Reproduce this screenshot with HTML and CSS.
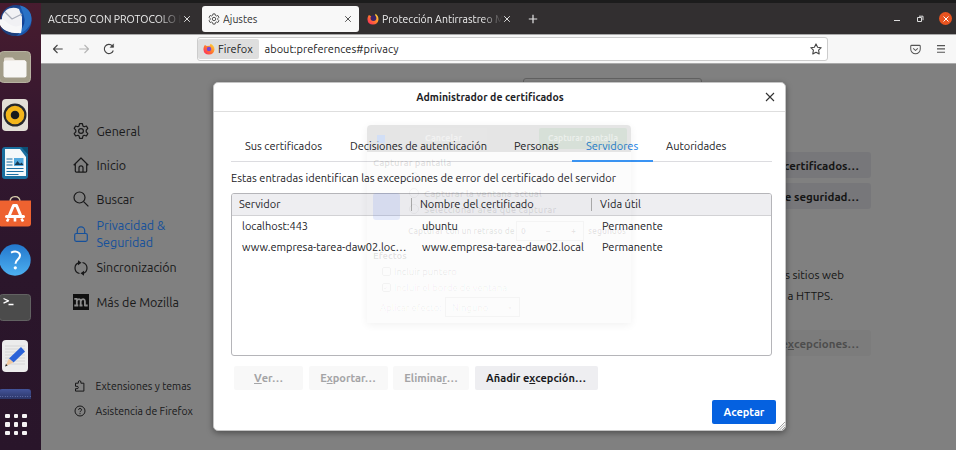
FILE: index.html
```html
<!DOCTYPE html>
<html lang="es">
<head>
<meta charset="utf-8">
<title>Ajustes</title>
<link rel="stylesheet" href="styles.css">
</head>
<body>
<div class="desktop">
  <div class="topstrip"></div>
  <nav class="dock">
    <div class="slot"><svg width="34" height="34" viewBox="0 0 34 34"><defs><radialGradient id="tb" cx=".75" cy=".6" r=".6"><stop offset="0" stop-color="#123f92"/><stop offset=".7" stop-color="#1c5cb2"/><stop offset="1" stop-color="#1a4288"/></radialGradient></defs><circle cx="18" cy="16.500" r="15.500" fill="url(#tb)"/><path d="M22 1.500c9 2 13 9 11 17-2 6-9 11-13 12 5-6 8-12 6-18-1-5-3-8-4-11z" fill="#2a72c6"/><path d="M4 13C6 5 14 2 21 5l3 8v9l-1 6-10-2-9-3z" fill="#f1f1f4"/><path d="M7 8 14 15 24 10" fill="none" stroke="#a9adb9" stroke-width="1.200"/><path d="M1 16c4-2 6 1 10 4 5 3 8 3 13 1l-1 8C15 30 6 29 2 21z" fill="#f7f7f8"/><path d="M2 22c4 5 12 8 20 7l-4 3C10 32 4 28 2 22z" fill="#1b3e7c"/></svg></div>
    <div class="slot"><svg width="32" height="32" viewBox="0 0 32 32"><rect x=".5" y=".5" width="31" height="31" rx="4" fill="#a29c88" stroke="#b7b2a1"/><path d="M5 10V8q0-1.500 1.500-1.500h7L16 9h10v4H5z" fill="#e4dcd2"/><rect x="4.500" y="9.500" width="23" height="17" rx="2" fill="#f8f7f5"/></svg></div>
    <div class="slot"><svg width="32" height="32" viewBox="0 0 32 32"><rect x="3" y="0" width="26" height="32" rx="4" fill="#e2ded6"/><circle cx="16" cy="16" r="11.500" fill="#26282d"/><circle cx="16" cy="16" r="6.800" fill="none" stroke="#f3b51b" stroke-width="5"/><circle cx="16" cy="16" r="3.800" fill="#16181c"/></svg></div>
    <div class="slot"><svg width="32" height="32" viewBox="0 0 32 32"><path d="M6 0h17l6 7v22q0 3-3 3H6q-3 0-3-3V3q0-3 3-3z" fill="#1a6f9f"/><path d="M22 0h7v7z" fill="#0c4e74"/><path d="M6 2h15l6 8v19H6z" fill="#f4f8fa"/><path d="M7.500 12h6M7.500 15h6M7.500 18h6M7.500 21.500h17M7.500 24.500h17M7.500 27.500h12" stroke="#1c6fa3" stroke-width="1.200"/><rect x="15" y="11" width="9.500" height="8" fill="#52a8dd"/><path d="m15.500 18 3-4 2.500 3 1.500-1.500L24.500 18z" fill="#173a52"/></svg></div>
    <div class="slot"><svg width="32" height="32" viewBox="0 0 32 32"><path d="M11 6q0-5.300 5-5.300t5 5.300" fill="none" stroke="#d9cfae" stroke-width="1.300"/><path d="M0 4.500h32v23q0 3-3 3H3q-3 0-3-3z" fill="#ee6230"/><path d="M10.500 19 14.500 9.500h3l4 9.500M7.500 20.500h17" stroke="#fff" stroke-width="3" fill="none" stroke-linecap="round"/><path d="M9.500 22.500 8 25.500M16 22v3.500M22.500 22.500l1.500 3" stroke="#fff" stroke-width="2.600" fill="none"/></svg></div>
    <div class="slot"><svg width="32" height="32" viewBox="0 0 32 32"><defs><linearGradient id="hp" x1="0" y1="0" x2="0" y2="1"><stop offset="0" stop-color="#2377cd"/><stop offset="1" stop-color="#4db0f0"/></linearGradient></defs><circle cx="16" cy="16" r="15.700" fill="url(#hp)"/><path d="M12 8.700c4-2 9-1.200 9 2.800 0 3.800-4.500 4.200-4.500 8.200" fill="none" stroke="#fff" stroke-width="2"/><circle cx="16.300" cy="23.800" r="1.600" fill="#fff"/></svg></div>
    <div class="slot"><svg width="32" height="28" viewBox="0 0 32 28"><rect x=".5" y=".5" width="31" height="26" rx="3" fill="#4b4b4b" stroke="#626262"/><path d="m4.500 4.500 5 2.300-5 2.300M9.500 10.500h5" stroke="#fff" stroke-width="1.300" fill="none"/></svg></div>
    <div class="slot"><svg width="32" height="32" viewBox="0 0 32 32"><rect x="3" y="0" width="26" height="32" rx="4" fill="#ececec"/><path d="M6 6h20M6 9h20M6 12h20M6 15h20M6 18h20M6 21h20M6 24h20" stroke="#d2d2d2" stroke-width=".8"/><path d="m22 7 4 4.500L14.500 22.500l-4.500-4z" fill="#2a62d8"/><path d="m10 18.500 4.500 4L6.500 26z" fill="#f0c9a0"/><path d="m6 26.500 1-2.500 1.700 1.500z" fill="#222"/></svg></div>
    <div class="partial"></div>
    <div class="apps"><i></i><i></i><i></i><i></i><i></i><i></i><i></i><i></i><i></i></div>
  </nav>
  <div class="browser">
    <header class="tabbar">
      <div class="tab tab-first"><span class="tabtext fade">ACCESO CON PROTOCOLO H</span><svg class="x" viewBox="0 0 8 8"><path d="m1.200 1.200 5.600 5.600m0-5.600L1.200 6.800"/></svg></div>
      <div class="tab tab-active"><svg width="12" height="12" viewBox="0 0 16 16" class="line"><path d="M6.600 1.200h2.800l.5 2 1.300.8 2-.7 1.400 2.400-1.500 1.500v1.600l1.500 1.500-1.400 2.400-2-.7-1.300.8-.5 2H6.600l-.5-2-1.300-.8-2 .7-1.400-2.400 1.500-1.500V7.200L1.400 5.700l1.400-2.400 2 .7 1.300-.8z"/><circle cx="8" cy="8" r="2.300"/></svg><span class="tabtext">Ajustes</span><svg class="x" viewBox="0 0 8 8"><path d="m1.200 1.200 5.600 5.600m0-5.600L1.200 6.800"/></svg></div>
      <div class="tab tab-third"><svg width="12" height="12" viewBox="0 0 16 16"><defs><linearGradient id="fx" x1=".9" y1=".1" x2=".1" y2=".9"><stop offset="0" stop-color="#ffd23c"/><stop offset=".5" stop-color="#ff7a2c"/><stop offset="1" stop-color="#ff2f5b"/></linearGradient></defs><path d="M2.500 2.500 5 4l6 .5L11 1c3 1.500 4.500 4.500 4.300 8A7.400 7.400 0 0 1 .6 8.500c0-2.500.7-4.500 1.900-6z" fill="url(#fx)"/><circle cx="8.600" cy="6.800" r="3.900" fill="#3b2468"/></svg><span class="tabtext fade">Protección Antirrastreo M</span><svg class="x" viewBox="0 0 8 8"><path d="m1.200 1.200 5.600 5.600m0-5.600L1.200 6.800"/></svg></div>
      <svg class="plus" width="10" height="10" viewBox="0 0 10 10"><path d="M5 .8v8.400M.8 5h8.400"/></svg>
      <div class="wincontrols">
        <svg width="8" height="8" viewBox="0 0 8 8"><path d="M1 5.500h6"/></svg>
        <svg width="8" height="8" viewBox="0 0 8 8"><path d="M1.500 2.500h4v4h-4zM3 1.200h4v4"/></svg>
        <span class="close"><svg width="8" height="8" viewBox="0 0 8 8"><path d="m1.500 1.500 5 5m0-5-5 5"/></svg></span>
      </div>
    </header>
    <div class="toolbar">
      <div class="navicons">
        <svg width="12" height="12" viewBox="0 0 12 12"><path d="M10.700 6H1.500m4-4-4 4 4 4"/></svg>
        <svg width="12" height="12" viewBox="0 0 12 12" class="dim"><path d="M1.300 6h9.200m-4-4 4 4-4 4"/></svg>
        <svg width="12" height="12" viewBox="0 0 12 12"><path d="M10.300 7.500A4.600 4.600 0 1 1 9.300 2.800l1 1"/><path d="M10.600.8v3.600H7z" fill="#444" stroke-width=".4"/></svg>
      </div>
      <div class="url">
        <span class="chip"><svg width="12" height="12" viewBox="0 0 16 16"><path d="M2.500 2.500 5 4l4-.5L10 1c3.500 1.500 5.500 4.500 5.300 8A7.400 7.400 0 0 1 .6 8.500c0-2.500.7-4.500 1.900-6z" fill="url(#fx)"/><circle cx="8" cy="8" r="3" fill="#7a45d0"/></svg>Firefox</span>
        <span class="address">about:preferences#privacy</span>
        <svg class="star" width="12" height="12" viewBox="0 0 12 12"><path d="m6 .9 1.600 3.300 3.600.5-2.600 2.500.6 3.700L6 9.200l-3.200 1.700.6-3.700L.8 4.700l3.600-.5z"/></svg>
      </div>
      <div class="rightbtns">
        <svg width="11" height="11" viewBox="0 0 12 12"><path d="M1.800 1.500h8.400q1 0 1 1V5.500a5.200 5.200 0 0 1-10.400 0V2.500q0-1 1-1zM3.500 4.700 6 7.100l2.500-2.400"/></svg>
        <svg width="10" height="10" viewBox="0 0 10 10"><path d="M1 1.600h8M1 4.900h8M1 8.200h8"/></svg>
      </div>
    </div>
    <div class="page">
      <aside class="side">
        <div class="cat"><svg viewBox="0 0 16 16"><path d="M6.600 .7h2.800l.5 2.200 1.300.8 2.200-.7 1.400 2.400-1.600 1.700v1.800l1.600 1.700-1.400 2.400-2.200-.7-1.300.8-.5 2.200H6.600l-.5-2.200-1.300-.8-2.200.7-1.400-2.400 1.600-1.700V7.100L1.200 5.400 2.600 3l2.200.7 1.300-.8z"/><circle cx="8" cy="8" r="2.400"/></svg><span>General</span></div>
        <div class="cat"><svg viewBox="0 0 16 16"><path d="M.7 8.200 8 1l7.300 7.200M2.300 7v7q0 1.200 1.200 1.200h9q1.200 0 1.200-1.200V7M6 15v-4.200a2 2 0 0 1 4 0V15"/></svg><span>Inicio</span></div>
        <div class="cat"><svg viewBox="0 0 16 16"><circle cx="6.500" cy="6.500" r="5.500"/><path d="m10.600 10.600 4.800 4.800"/></svg><span>Buscar</span></div>
        <div class="cat selected"><svg viewBox="0 0 16 16"><rect x="1.700" y="7.500" width="12.600" height="7.800" rx="1.500"/><path d="M4.300 7.500V4.600a3.700 3.700 0 0 1 7.400 0v2.900"/></svg><span>Privacidad &amp;<br>Seguridad</span></div>
        <div class="cat"><svg viewBox="0 0 16 16"><path d="M6.500 13.500C.5 12 .5 4 6.500 2.600M9.500 2.500c6 1.500 6 9.500 0 11"/><path d="M5 .2 8.500 2.800 5 5.200zM11 10.800 7.500 13.300l3.500 2.500z" class="solid"/></svg><span>Sincronización</span></div>
        <div class="cat"><svg viewBox="0 0 16 16"><rect width="16" height="16" class="block"/><path d="M1.300 4.800h2.500v6.500M1.300 11.500h4M3.800 7C5 4.500 7.500 4.600 7.700 7v4.500M6.500 11.500H9.500M7.800 7c1.200-2.500 3.900-2.400 4.100 0v4.500h2.800" class="mm"/></svg><span>Más de Mozilla</span></div>
        <div class="foot">
          <div class="link"><svg viewBox="0 0 12 12"><path d="M1.500 3.200H4.300V2a1.300 1.300 0 0 1 2.600 0v1.200h3v7.900H1.500V8.700h1.600a1.200 1.200 0 0 0 0-2.400H1.500z"/></svg><span>Extensiones y temas</span></div>
          <div class="link"><svg viewBox="0 0 12 12"><circle cx="6" cy="6" r="5"/><path d="M4.500 4.800C4.500 3 7.600 3 7.600 4.800 7.600 5.900 6 6 6 7.200M6 8.200v1"/></svg><span>Asistencia de Firefox</span></div>
        </div>
      </aside>
      <main class="prefs">
        <div class="search"></div>
        <div class="bgbtn">Ver certificados…</div>
        <div class="bgbtn second">Dispositivos de seguridad…</div>
        <p class="https"><span>los sitios web</span><span class="l2">a HTTPS.</span></p>
        <div class="bgbtn off">e<u>x</u>cepciones…</div>
      </main>
    </div>
  </div>

  <section class="dialog">
    <div class="dtitle"><span>Administrador de certificados</span><svg width="10" height="10" viewBox="0 0 10 10"><path d="m1 1 8 8m0-8L1 9"/></svg></div>
    <div class="dtabs"><span>Sus certificados</span><span>Decisiones de autenticación</span><span>Personas</span><span class="on">Servidores</span><span>Autoridades</span></div>
    <p class="desc">Estas entradas identifican las excepciones de error del certificado del servidor</p>
    <div class="table">
      <div class="row head"><span>Servidor</span><span>Nombre del certificado</span><span>Vida útil</span></div>
      <div class="row"><span>localhost:443</span><span>ubuntu</span><span>Permanente</span></div>
      <div class="row"><span>www.empresa-tarea-daw02.loc…</span><span>www.empresa-tarea-daw02.local</span><span>Permanente</span></div>
    </div>
    <div class="actions">
      <span class="btn b1"><u>V</u>er…</span><span class="btn b2">E<u>x</u>portar…</span><span class="btn b3">Elimina<u>r</u>…</span><span class="btn b4">Añadir e<u>x</u>cepción…</span>
    </div>
    <div class="accept"><span>Aceptar</span></div>
    <svg class="grip" width="8" height="8" viewBox="0 0 8 8"><path d="M0 8 8 0M2.500 8 8 2.500M5 8l3-3"/></svg>
  </section>

  <section class="ghost">
    <div class="ghead"><i></i><span class="gc">Cancelar</span><span class="gs">Capturar pantalla</span></div>
    <div class="gbody">
      <b>Capturar pantalla</b>
      <div class="gmodes"><i class="thumb"></i><div class="radios"><span>&nbsp;</span><span>Capturar la ventana actual</span><span>Seleccionar área que capturar</span></div></div>
      <div class="delay"><span class="dt">Capturar con un retraso de</span><span class="spin"><em>0</em><em>−</em><em>+</em></span><span>segundos</span></div>
      <b>Efectos</b>
      <div class="check"><i></i>Incluir puntero</div>
      <div class="check faint"><i>✓</i>Incluir el borde de ventana</div>
      <div class="effect"><span class="el">Aplicar efecto:</span><span class="sel">Ninguno<small>▼</small></span></div>
    </div>
  </section>
</div>
</body>
</html>
```
FILE: styles.css
```css
* { box-sizing: border-box; }
body { margin: 0; width: 956px; height: 450px; overflow: hidden; font-family: "Ubuntu", "Noto Sans", sans-serif; font-size: 11px; color: #222; }
p { margin: 0; }
svg { display: block; flex: none; fill: none; stroke-linejoin: round; }
.desktop { position: relative; width: 956px; height: 450px; display: grid; grid-template: 3px 447px / 41px 915px; background: #808080; }
.topstrip { grid-column: 1 / 3; background: #1c1c1c; }

.dock { background: linear-gradient(#481c2f, #33172f 30%, #2b162b 60%, #29152a); display: flex; flex-direction: column; overflow: hidden; }
.slot { height: 48.25px; width: 32px; display: flex; align-items: center; justify-content: center; flex: none; margin-left: -1px; }
.slot:first-child { height: 40px; padding-bottom: 5px; }
.slot:first-child + .slot { height: 48px; }
.partial { height: 10px; width: 32px; margin-left: -1px; border-radius: 3px 3px 0 0; background: radial-gradient(circle, #6c7ab5 35%, transparent 40%) 0 6px / 2.500px 2.500px repeat-x, linear-gradient(#43549a, #2c3566); flex: none; margin-top: 8px; }
.apps { display: grid; grid-template-columns: repeat(3, 4.500px); gap: 4px; margin: 15px 0 0 5px; }
.apps i { height: 4.500px; background: #f5f3f4; border-radius: 1px; }

.browser { display: grid; grid-template-rows: 31px 30px 386px; }
.tabbar { background: #322f30; display: flex; align-items: center; color: #f0f0f0; font-size: 10.500px; }
.tab { display: flex; align-items: center; height: 26px; margin-top: 1px; border-radius: 3px; }
.tabtext { white-space: nowrap; overflow: hidden; flex: 1; }
.fade { mask-image: linear-gradient(90deg, #000 82%, transparent); }
.x { width: 8px; height: 8px; stroke: #ddd; stroke-width: 1; }
.tab-first { width: 161px; padding: 0 11px 0 7px; }
.tab-first .tabtext { margin-right: 1px; }
.tab-active { width: 157px; background: #f8f8f8; color: #333; padding: 0 7px 0 6px; gap: 3px; }
.tab-active .x { stroke: #555; }
.line { stroke: #444; stroke-width: 1.200; }
.tab-third { width: 157px; padding: 0 5px 0 8px; gap: 3px; }
.tab-third .x { margin-left: -3px; }
.plus { stroke: #e4e4e4; stroke-width: 1.200; margin-left: 12px; }
.wincontrols { margin-left: auto; display: flex; align-items: center; gap: 15px; padding-right: 4px; stroke: #ddd; stroke-width: 1; }
.close { width: 13px; height: 13px; border-radius: 50%; background: #e95420; display: flex; align-items: center; justify-content: center; stroke: #fff; }

.toolbar { background: #f7f7f7; border-top: 1px solid #aaa; border-bottom: 1px solid #aaa; display: flex; align-items: center; }
.navicons { display: flex; gap: 13.500px; width: 156px; padding-left: 11px; stroke: #444; stroke-width: 1.100; }
.navicons .dim { stroke: #b5b5b5; }
.url { width: 631px; height: 24px; border: 1px solid #ccc; border-radius: 3px; background: #fff; display: flex; align-items: center; }
.chip { width: 61px; height: 20px; background: #dedede; border-radius: 2px; display: flex; align-items: center; gap: 3px; padding-left: 5px; }
.address { margin-left: 5.500px; flex: 1; letter-spacing: .03px; }
.star { stroke: #444; stroke-width: 1.100; margin-right: 5px; }
.rightbtns { display: flex; align-items: center; gap: 15px; margin-left: 82px; stroke: #555; stroke-width: 1.100; }

.page { background: #808080; display: grid; grid-template-columns: 172px 743px; overflow: hidden; }
.side { padding: 50px 0 0 32px; color: #181819; font-size: 12.500px; }
.cat { height: 34.200px; display: flex; align-items: center; gap: 7.500px; line-height: 17px; white-space: nowrap; }
.cat svg { width: 16px; height: 16px; stroke: currentColor; stroke-width: 1.200; }
.cat .solid { fill: currentColor; stroke: none; }
.cat .block { fill: #101010; stroke: none; }
.cat .mm { stroke: #8c8c8c; stroke-width: 1.800; }
.selected { color: #15509b; }
.foot { margin-top: 54px; font-size: 10.500px; }
.link { height: 25.500px; display: flex; align-items: center; gap: 9.500px; padding-left: 1px; white-space: nowrap; }
.link svg { width: 12px; height: 12px; stroke: currentColor; stroke-width: 1; }

.prefs { display: flex; flex-direction: column; align-items: flex-end; padding: 14px 85px 0 0; color: #151515; }
.search { width: 179px; height: 24px; border: 1px solid #626262; border-radius: 3px; margin-right: 169px; }
.bgbtn { height: 26px; width: 200px; margin-top: 50px; background: #77777a; border-radius: 3px; font-weight: 700; font-size: 11.500px; display: flex; align-items: center; justify-content: flex-end; padding-right: 12px; }
.bgbtn.second { margin-top: 5px; }
.https { display: flex; flex-direction: column; align-items: flex-end; margin-top: 55px; line-height: 21px; font-size: 11.500px; padding-right: 27px; }
.l2 { margin-right: 11px; }
.bgbtn.off { margin-top: 24px; background: #7c7c7c; color: #4d4d4d; }

.dialog { position: absolute; left: 213px; top: 82px; width: 573px; height: 349px; background: #fff; border-radius: 5px; border: 1px solid #c4c4c4; box-shadow: 0 2px 6px rgba(0,0,0,.4); display: flex; flex-direction: column; color: #222226; }
.dtitle { height: 29px; border-bottom: 1px solid #dedede; display: flex; align-items: center; font-weight: 700; font-size: 10.500px; flex: none; }
.dtitle span { flex: 1; text-align: center; letter-spacing: .03px; }
.dtitle svg { stroke: #333; stroke-width: 1.100; margin-right: 10px; }
.dtitle span { padding-left: 1px; }
.dtabs { margin: 21px 13px 0 17px; height: 29px; display: flex; border-bottom: 1px solid #dcdce0; flex: none; white-space: nowrap; }
.dtabs span { height: 29px; line-height: 27px; padding: 0 0 0 14px; }
.dtabs span:nth-child(1) { width: 105px; }
.dtabs span:nth-child(2) { width: 164px; }
.dtabs span:nth-child(3) { width: 72px; }
.dtabs .on { width: 81px; color: #2284e8; border-bottom: 2px solid #3a94f4; }
.dtabs span:last-child { padding-left: 13px; }
.desc { margin: 6px 0 0 17px; height: 20px; line-height: 20px; white-space: nowrap; letter-spacing: .03px; }
.table { margin: 5px 13px 0 17px; height: 163px; border: 1px solid #b5b5b9; border-radius: 3px; flex: none; overflow: hidden; }
.row { display: grid; grid-template-columns: 180px 180px 1fr; height: 21.300px; line-height: 21px; white-space: nowrap; }
.row span { padding-left: 10px; }
.head { background: #eeeef1; border-bottom: 1px solid #d2d2d5; height: 22px; }
.head span { padding-left: 7px; position: relative; }
.head span + span { padding-left: 8px; }
.head span + span::before { content: ""; position: absolute; left: -1px; top: 4px; height: 13px; width: 1px; background: #aaa; }
.actions { display: flex; margin: 10px 0 0 20px; gap: 5.500px; flex: none; }
.btn { height: 24px; border-radius: 2px; background: #f8f8f8; color: #a4a4a6; font-weight: 700; display: flex; align-items: center; justify-content: center; }
.b1 { width: 69px; } .b2 { width: 79px; } .b3 { width: 76px; }
.b4 { width: 123px; background: #eeeef1; color: #1a1a1e; }
.accept { display: flex; justify-content: flex-end; margin: 10px 9px 0 0; }
.accept span { width: 64px; height: 24px; border-radius: 2px; background: #0561e0; color: #fff; font-weight: 700; display: flex; align-items: center; justify-content: center; }
.grip { position: absolute; right: 0; bottom: 0; stroke: #888; stroke-width: .8; }

.ghost { position: absolute; left: 367px; top: 125px; width: 264px; height: 198px; border-radius: 4px 4px 0 0; background: rgba(120,120,120,.02); box-shadow: 0 2px 8px rgba(0,0,0,.06); color: rgba(0,0,0,.09); font-size: 9.500px; white-space: nowrap; }
.ghead { height: 27px; background: rgba(0,0,0,.09); border-radius: 4px 4px 0 0; display: flex; align-items: center; color: rgba(255,255,255,.5); font-weight: 600; font-size: 9px; }
.ghead i { width: 8px; height: 8px; background: rgba(200,220,255,.65); margin-left: 10px; }
.gc { width: 87px; text-align: center; margin-left: 15px; height: 21px; line-height: 21px; background: rgba(255,255,255,.04); }
.gs { width: 88px; text-align: center; margin-left: 52px; height: 21px; line-height: 21px; background: rgba(80,180,90,.09); border-radius: 2px; font-size: 8.500px; }
.gbody { padding: 4px 6px; }
.gbody b { display: block; line-height: 14px; color: rgba(0,0,0,.11); }
.gmodes { display: flex; gap: 9px; height: 50px; }
.thumb { width: 27px; height: 27px; border-radius: 3px; background: rgba(90,130,240,.14); margin-top: 24px; margin-top: 23px; }
.radios { display: flex; flex-direction: column; line-height: 16px; }
.radios span { padding-left: 13px; font-weight: 600; }
.radios span::before { content: ""; display: inline-block; vertical-align: -1px; width: 8px; height: 8px; border: 1px solid rgba(0,0,0,.04); border-radius: 50%; margin: 0 5px 0 -13px; }
.delay { display: flex; align-items: center; gap: 4px; height: 20px; margin: 1px 0 8px 35px; font-weight: 600; font-size: 8.500px; }
.dt { width: 104px; }
.spin { display: flex; width: 68px; height: 20px; border: 1px solid rgba(0,0,0,.03); justify-content: space-between; padding: 0 7px 0 4px; align-items: center; flex: none; }
.spin em { font-style: normal; }
.check { display: flex; align-items: center; gap: 3px; height: 16.500px; padding-left: 9px; }
.check i { width: 9px; height: 9px; border: 1px solid rgba(0,0,0,.04); border-radius: 2px; font-style: normal; font-size: 8px; line-height: 8px; }
.faint { color: rgba(0,0,0,.05); }
.effect { display: flex; align-items: center; padding-left: 7px; margin-top: 1px; color: rgba(0,0,0,.05); }
.el { width: 65px; }
.sel { width: 75px; height: 20px; border: 1px solid rgba(0,0,0,.03); display: flex; align-items: center; justify-content: space-between; padding: 0 6px; }
.sel small { font-size: 6px; }
```
